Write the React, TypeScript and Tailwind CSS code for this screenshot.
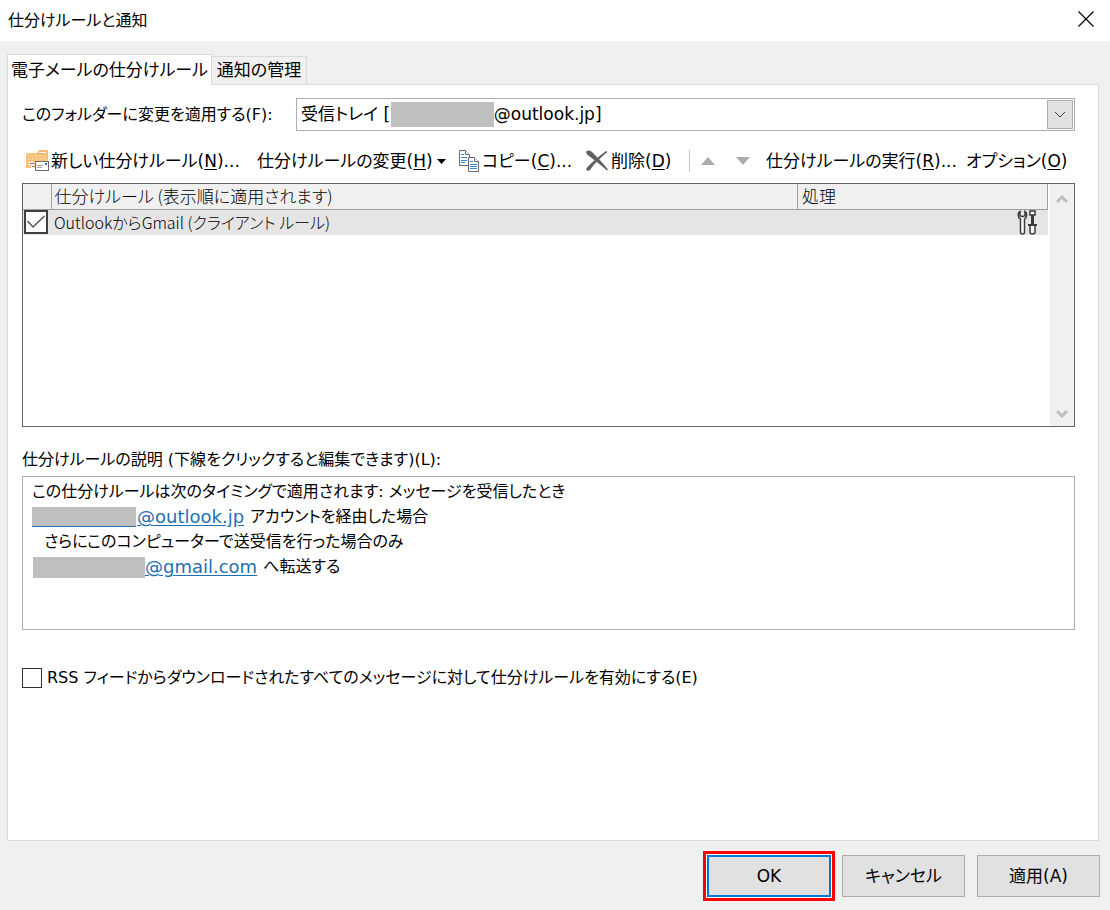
import React from 'react';

const UI_FONT = 'font-["DejaVu_Sans","Noto_Sans_CJK_JP",sans-serif] [font-feature-settings:"palt"]';
const LIST_FONT = 'font-["Noto_Sans_CJK_JP",sans-serif] font-light';

const HIDDEN_NAME = '\u2003\u2003\u2003\u2003\u2003\u2002\u2009\u2009\u2009';

const FolderIcon = () => (
  <svg width="24" height="24" viewBox="0 0 24 24" aria-hidden="true">
    <path d="M1 4h11l2-3h9v18H1z" fill="#f6c27c" />
    <path d="M13 4.5l1.5-2h7v2z" fill="#fff" stroke="#f3b25f" />
    <path d="M2 7h20M3 10h18M2 13h9M3 16h7" stroke="#fbdcae" strokeDasharray="2 2" />
    <path d="M4 14.500h5M6 17.500h3" stroke="#fff" strokeWidth="3" />
    <path d="M5 14.500h4M7 17.500h2" stroke="#6b6b76" />
    <rect x="10.500" y="12.500" width="13" height="9" fill="#fff" stroke="#6b6b76" />
    <path d="M12 16.500h6M12 18.500h5" stroke="#a0a0aa" />
    <rect x="20" y="14" width="2" height="2" fill="#1e78c8" />
  </svg>
);

const CopyIcon = () => (
  <svg width="22" height="24" viewBox="0 0 22 24" fill="#fff" stroke="#6b6b76" aria-hidden="true">
    <path d="M1.500 1.500h6l4 4v11h-10z" />
    <path d="M7.500 1.500v4h4" />
    <path d="M3 5.500h3M3 8.500h6M3 11.500h6M3 13.500h4" stroke="#3a86c8" />
    <path d="M10.500 8.500h6l4 4v10h-10z" />
    <path d="M16.500 8.500v4h4" />
    <path d="M12 12.500h3M12 15.500h7M12 17.500h7M12 19.500h7" stroke="#3a86c8" />
  </svg>
);

const DeleteIcon = () => (
  <svg width="24" height="22" viewBox="0 0 24 22" fill="#636367" aria-hidden="true">
    <path d="M1 2C2 0 5 0 7 2C12 7 17 12 23 19.500L22 20.500C16 15 9 10 2 4.500Z" />
    <path d="M22.500 2L21 1C14 6 7 12 1.500 18C0 20 3 22 5 20C9 14 15 8 22.500 2Z" />
  </svg>
);

const ToolsIcon = () => (
  <svg width="20" height="25" viewBox="0 0 20 25" fill="#fff" stroke="#3b3b3b" strokeWidth="1.500" aria-hidden="true">
    <path d="M3 1.500C.5 3 .3 7 3.500 9v13q0 2 2 2t2-2V9C10.500 7 10.300 3 8 1.500v4.200l-2.500 1L3 5.700z" />
    <path d="M13 1h5v4h-5z" />
    <path d="M15.500 5v9" strokeWidth="3" />
    <path d="M13 15v7q0 2 2.500 2t2.500-2v-7" />
    <path d="M11 15h9" strokeWidth="2" />
  </svg>
);

const Chevron = ({ d, className }: { d: string; className: string }) => (
  <svg width="12" height="8" viewBox="0 0 12 8" fill="none" stroke="currentColor" className={className} aria-hidden="true">
    <path d={d} />
  </svg>
);

const ToolButton = ({ icon, label, accessKey, suffix }: { icon?: React.ReactNode; label: string; accessKey: string; suffix?: React.ReactNode }) => (
  <button type="button" className="flex items-center gap-[2px] whitespace-nowrap">
    {icon}
    <span>
      {label}(<u className="underline-offset-2">{accessKey}</u>){suffix}
    </span>
  </button>
);

const App: React.FC = () => (
  <div className={`flex min-h-screen flex-col bg-[#f0f0f0] text-[17px] leading-[25px] text-black ${UI_FONT}`}>
    <header className="flex h-[41px] items-center justify-between bg-white pr-4 pl-2">
      <h1 className="text-[16px]">仕分けルールと通知</h1>
      <button type="button" aria-label="閉じる" className="mb-1">
        <svg width="16" height="16" viewBox="0 0 16 16" stroke="#000" strokeWidth="1.200">
          <path d="M.5.5l15 15M15.500.5l-15 15" />
        </svg>
      </button>
    </header>

    <main className="flex flex-1 flex-col pt-[13px] pr-[11px] pl-[7px]">
      <div role="tablist" className="flex items-end">
        <button type="button" role="tab" aria-selected="true" className="z-10 -mb-px h-[31px] w-[205px] border border-b-0 border-[#dadada] bg-white whitespace-nowrap">
          電子メールの仕分けルール
        </button>
        <button type="button" role="tab" aria-selected="false" className="h-7 w-[95px] border border-b-0 border-l-0 border-[#dadada] whitespace-nowrap">
          通知の管理
        </button>
      </div>

      <section className="flex-1 border border-[#dadada] bg-white pt-[13px] pr-[23px] pl-[14px]">
        <div className="flex h-[33px] items-center">
          <label htmlFor="folder" className="w-[274px] shrink-0 text-[16px] whitespace-nowrap">このフォルダーに変更を適用する(F):</label>
          <div className="relative h-full flex-1">
            <select id="folder" className="h-full w-full appearance-none rounded-none border border-[#abadb3] bg-white px-1">
              <option>受信トレイ [{HIDDEN_NAME}@outlook.jp]</option>
            </select>
            <span className="pointer-events-none absolute top-1 left-[95px] h-[25px] w-[103px] bg-[#bfbfbf]" />
            <span className="pointer-events-none absolute top-[2px] right-[2px] flex h-[29px] w-[26px] items-center justify-center border border-[#abadb3] bg-[#e1e1e1]">
              <Chevron d="M1 1l5 5 5-5" className="text-[#404040]" />
            </span>
          </div>
        </div>

        <div className="mt-4 flex h-7 items-center" role="toolbar">
          <div className="ml-[3px] w-[232px]"><ToolButton icon={<FolderIcon />} label="新しい仕分けルール" accessKey="N" suffix="..." /></div>
          <div className="flex w-[201px] items-center gap-1">
            <ToolButton label="仕分けルールの変更" accessKey="H" />
            <svg width="9" height="5" viewBox="0 0 9 5" aria-hidden="true"><path d="M0 0h9L4.500 5z" /></svg>
          </div>
          <div className="w-[127px]"><ToolButton icon={<CopyIcon />} label="コピー" accessKey="C" suffix="..." /></div>
          <div className="w-[104px]"><ToolButton icon={<DeleteIcon />} label="削除" accessKey="D" /></div>
          <div className="flex w-[77px] items-center">
            <span className="mr-[11px] h-[22px] w-px bg-[#c6c6c6]" />
            <button type="button" aria-label="上へ" className="mr-[21px]">
              <svg width="14" height="8" viewBox="0 0 14 8" fill="#acacb0"><path d="M7 0l7 8H0z" /></svg>
            </button>
            <button type="button" aria-label="下へ">
              <svg width="14" height="8" viewBox="0 0 14 8" fill="#acacb0"><path d="M0 0h14L7 8z" /></svg>
            </button>
          </div>
          <div className="w-[200px]"><ToolButton label="仕分けルールの実行" accessKey="R" suffix="..." /></div>
          <ToolButton label="オプション" accessKey="O" />
        </div>

        <div className="mt-2 flex h-[244px] gap-[2px] border border-[#646464]">
          <div className="flex-1">
            <table className={`w-full table-fixed border-collapse leading-6 ${LIST_FONT}`}>
              <thead>
                <tr className="h-[25px] border-r border-b border-[#a0a0a0] bg-[#f0f0f0] text-left">
                  <th className="w-7 border-r border-[#a0a0a0] p-0" aria-label="有効" />
                  <th className="border-r border-[#a0a0a0] p-0 pl-[3px] font-light">仕分けルール (表示順に適用されます)</th>
                  <th className="w-[250px] p-0 pl-1 font-light">処理</th>
                </tr>
              </thead>
              <tbody>
                <tr className="h-[25px] bg-[#e5e5e5] text-[16px]">
                  <td className="p-0">
                    <div className="relative ml-px size-6">
                      <input type="checkbox" defaultChecked aria-label="OutlookからGmail" className="block size-6 appearance-none border-2 border-[#404040] bg-white" />
                      <svg width="20" height="16" viewBox="0 0 20 16" fill="none" stroke="#4a5a4e" strokeWidth="1.500" className="pointer-events-none absolute top-1 left-[2px]" aria-hidden="true">
                        <path d="M1.500 7l5.500 6L18.500 2" />
                      </svg>
                    </div>
                  </td>
                  <td className="p-0 pl-[3px]">OutlookからGmail (クライアント ルール)</td>
                  <td className="p-0 pr-[11px]"><div className="flex justify-end"><ToolsIcon /></div></td>
                </tr>
              </tbody>
            </table>
          </div>
          <div className="flex w-6 flex-col items-center justify-between bg-[#f0f0f0] py-2 text-[#bfbfbf]">
            <Chevron d="M1 7l5-5 5 5" className="mt-[3px] stroke-[3]" />
            <Chevron d="M1 1l5 5 5-5" className="stroke-[3]" />
          </div>
        </div>

        <h2 className="mt-5 text-[16px]">仕分けルールの説明 (下線をクリックすると編集できます)(L):</h2>
        <div className="mt-1 h-[154px] border border-[#abadb3] pt-[2px] pl-[9px] text-[16px] whitespace-nowrap">
          <p>この仕分けルールは次のタイミングで適用されます: メッセージを受信したとき</p>
          <p className="flex">
            <a href="#account" className="flex text-[18px] text-[#1f6fb5] underline underline-offset-2">
              <span className="mt-[3px] mr-px h-5 w-[104px] border-b border-[#1f6fb5] bg-[#bfbfbf]" />@outlook.jp
            </a>
            <span className="ml-[6px]">アカウントを経由した場合</span>
          </p>
          <p className="pl-3">さらにこのコンピューターで送受信を行った場合のみ</p>
          <p className="flex">
            <a href="#recipient" className="flex text-[18px] text-[#1f6fb5] underline underline-offset-2">
              <span className="mt-[3px] ml-px h-[21px] w-[112px] bg-[#bfbfbf]" />@gmail.com
            </a>
            <span className="ml-[6px]">へ転送する</span>
          </p>
        </div>

        <label className="mt-[35px] flex items-center gap-[5px] text-[16px] whitespace-nowrap">
          <input type="checkbox" className="size-5 appearance-none border border-[#333] bg-white" />
          RSS フィードからダウンロードされたすべてのメッセージに対して仕分けルールを有効にする(E)
        </label>
      </section>
    </main>

    <footer className="flex items-center justify-end gap-3 pt-[10px] pr-[10px] pb-[9px]">
      <div className="-mr-[5px] border-[3px] border-[#f00] bg-white p-px">
        <button type="button" className="block h-[42px] w-[124px] border-2 border-[#0078d7] bg-[#e1e1e1]">OK</button>
      </div>
      <button type="button" className="h-[42px] w-[123px] border border-[#adadad] bg-[#e1e1e1]">キャンセル</button>
      <button type="button" className="h-[42px] w-[123px] border border-[#adadad] bg-[#e1e1e1]">適用(A)</button>
    </footer>
  </div>
);

export default App;
